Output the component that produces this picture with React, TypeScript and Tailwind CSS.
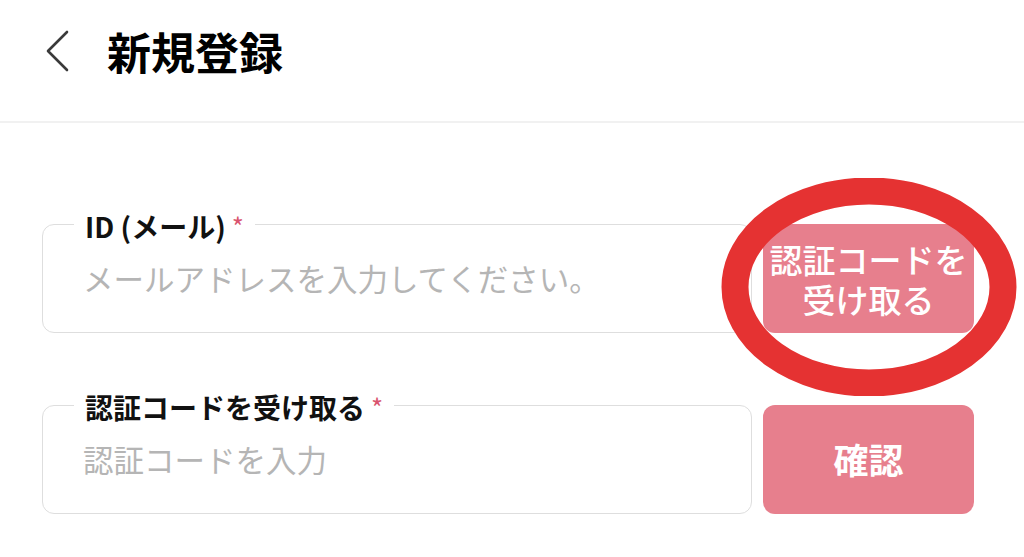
import React from "react";

const font = { fontFamily: '"Noto Sans CJK JP", "Noto Sans", sans-serif' };

function Field({
  label,
  placeholder,
  action,
  actionClass,
}: {
  label: string;
  placeholder: string;
  action: React.ReactNode;
  actionClass: string;
}) {
  return (
    <div className="flex gap-[11px]">
      <div className="relative flex h-[109px] flex-1 items-center rounded-[12px] border border-[#dedede] px-[40px]">
        <span className="absolute left-[31px] top-[-17px] flex items-center bg-white px-[11px] text-[28px] font-bold leading-[36px] text-[#111]">
          {label}
          <span className="ml-[6px] text-[26px] font-normal leading-[36px] text-[#d9546e]">*</span>
        </span>
        <input
          className="w-full bg-transparent text-[30.5px] text-[#333] outline-none placeholder:text-[#b5b5b5]"
          placeholder={placeholder}
          style={font}
        />
      </div>
      <button
        className={`flex h-[109px] w-[211px] items-center justify-center rounded-[12px] bg-[#e77f8d] text-white ${actionClass}`}
        style={font}
      >
        {action}
      </button>
    </div>
  );
}

export default function App() {
  return (
    <div className="relative min-h-[557px] w-[1024px] overflow-hidden bg-white" style={font}>
      <header className="flex h-[123px] items-start border-b-2 border-[#f1f1f1] pt-[28px]">
        <div className="flex h-[46px] items-center pl-[46px]">
          <svg width="24" height="42" viewBox="0 0 24 42" fill="none">
            <path d="M21 2 L2 21 L21 40" stroke="#3a3a3a" strokeWidth="2.6" strokeLinecap="round" strokeLinejoin="round" />
          </svg>
        </div>
        <h1 className="ml-[37px] text-[44px] font-bold leading-[46px] text-black">新規登録</h1>
      </header>

      <main className="ml-[42px] mt-[101px] flex w-[932px] flex-col gap-[72px]">
        <Field
          label="ID (メール)"
          placeholder="メールアドレスを入力してください。"
          actionClass="flex-col text-[33px] font-medium leading-[40px]"
          action={
            <>
              <span>認証コードを</span>
              <span>受け取る</span>
            </>
          }
        />
        <Field
          label="認証コードを受け取る"
          placeholder="認証コードを入力"
          actionClass="text-[35px] font-bold"
          action="確認"
        />
      </main>

      <svg
        className="pointer-events-none absolute left-[721px] top-[178px]"
        width="296"
        height="218"
        viewBox="0 0 296 218"
        fill="none"
      >
        <ellipse cx="148" cy="109" rx="134" ry="96" stroke="#e53232" strokeWidth="27" />
      </svg>
    </div>
  );
}
